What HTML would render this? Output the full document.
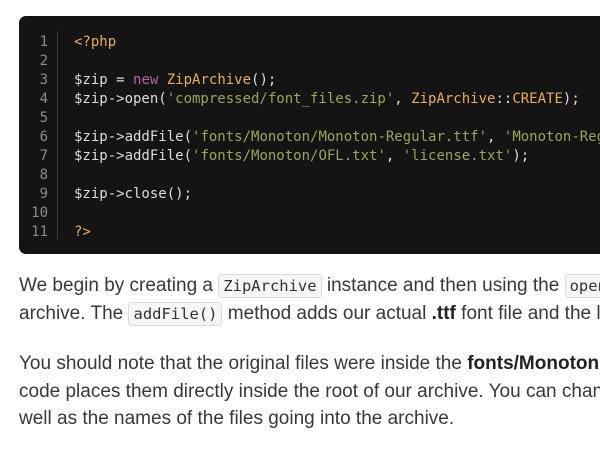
<!DOCTYPE html>
<html><head><style>
html,body{margin:0;padding:0;background:#fff;width:600px;height:450px;overflow:hidden}
.wrap{position:absolute;left:0;top:0;width:600px;height:450px;overflow:hidden}
.code{position:absolute;left:19px;top:16px;width:620px;height:238px;background:#141414;border-radius:7px;font-family:"DejaVu Sans Mono","Liberation Mono",monospace;font-size:14px;line-height:19px;color:#dcdcdc}
.nums{position:absolute;left:0;top:17px;width:29px;text-align:right;color:#8c8c8c}
.sep{position:absolute;left:38px;top:15px;width:1px;height:208px;background:#3a3a3a}
.src{position:absolute;left:55px;top:17px;white-space:pre}
.k{color:#b0679f}.c{color:#e8ad5a}.s{color:#98a65a}.t{color:#e8ad5a}
.p{position:absolute;left:19px;font-family:"Liberation Sans",sans-serif;font-size:19px;color:#383838;white-space:nowrap;line-height:28px}
code{font-family:"DejaVu Sans Mono","Liberation Mono",monospace;font-size:15.5px;background:#f6f6f6;border:1px solid #dcdcdc;border-radius:4px;padding:2px 4px;color:#333}
b{color:#222}
</style></head><body><div class="wrap">
<div class="code">
<div class="nums">1<br>2<br>3<br>4<br>5<br>6<br>7<br>8<br>9<br>10<br>11</div>
<div class="sep"></div>
<div class="src"><span class="t">&lt;?php</span>

$zip = <span class="k">new</span> <span class="c">ZipArchive</span>();
$zip-&gt;open(<span class="s">'compressed/font_files.zip'</span>, <span class="c">ZipArchive</span>::<span class="c">CREATE</span>);

$zip-&gt;addFile(<span class="s">'fonts/Monoton/Monoton-Regular.ttf'</span>, <span class="s">'Monoton-Regular.ttf'</span>);
$zip-&gt;addFile(<span class="s">'fonts/Monoton/OFL.txt'</span>, <span class="s">'license.txt'</span>);

$zip-&gt;close();

<span class="t">?&gt;</span></div>
</div>
<div class="p" style="top:272px">We begin by creating a <code>ZipArchive</code> instance and then using the <code>open()</code> method</div>
<div class="p" style="top:300px">archive. The <code>addFile()</code> method adds our actual <b>.ttf</b> font file and the license</div>
<div class="p" style="top:350px">You should note that the original files were inside the <b>fonts/Monoton</b> directory.</div>
<div class="p" style="top:378px">code places them directly inside the root of our archive. You can change the</div>
<div class="p" style="top:405px">well as the names of the files going into the archive.</div>
</div></body></html>
